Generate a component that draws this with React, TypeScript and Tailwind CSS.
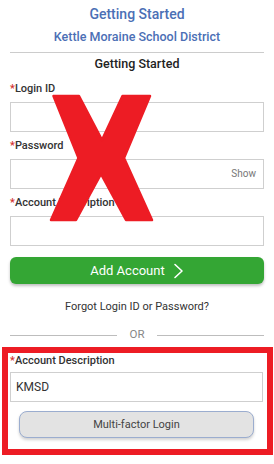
import React from "react";

function Label({ text }: { text: string }) {
  return (
    <div className="h-[16px] leading-[16px] text-[11px] font-medium text-[#333333]">
      <span className="text-[#d32f2f]">*</span>
      {text}
    </div>
  );
}

export default function App() {
  return (
    <div
      className="relative w-[274px] h-[464px] bg-white overflow-hidden"
      style={{ fontFamily: "Roboto, 'Liberation Sans', sans-serif" }}
    >
      <div className="flex flex-col px-[10px]">
        <div className="mt-[4px] h-[20px] leading-[20px] text-center text-[14px] font-medium text-[#4b6fb5]">
          Getting Started
        </div>
        <div className="mt-[4px] h-[18px] leading-[18px] text-center text-[12.5px] font-medium text-[#4b6fb5]">
          Kettle Moraine School District
        </div>
        <div className="mt-[6px] h-px bg-[#cccccc]" />
        <div className="mt-[2px] h-[18px] leading-[18px] text-center text-[12.5px] font-medium text-[#222222]">
          Getting Started
        </div>

        <div className="mt-[8px]">
          <Label text="Login ID" />
        </div>
        <div className="mt-[5px] h-[30px] border border-[#cfcfcf] bg-white" />

        <div className="mt-[6px]">
          <Label text="Password" />
        </div>
        <div className="mt-[5px] h-[30px] border border-[#cfcfcf] bg-white flex items-center justify-end pr-[7px]">
          <span className="text-[10px] text-[#777777] leading-none">Show</span>
        </div>

        <div className="mt-[6px]">
          <Label text="Account Description" />
        </div>
        <div className="mt-[5px] h-[30px] border border-[#cfcfcf] bg-white" />

        <div className="mt-[11px] h-[27px] rounded-[6px] bg-[#34a634] shadow-[0_2px_3px_rgba(0,0,0,0.25)] flex items-center justify-center gap-[8px]">
          <span className="text-[13px] text-white leading-none">Add Account</span>
          <svg width="11" height="16" viewBox="0 0 11 16" fill="none">
            <path d="M2 1.5 L9 8 L2 14.5" stroke="white" strokeWidth="1.6" strokeLinecap="round" strokeLinejoin="round" />
          </svg>
        </div>

        <div className="mt-[15px] h-[16px] leading-[16px] text-center text-[11px] text-[#333333]">
          Forgot Login ID or Password?
        </div>

        <div className="mt-[12px] h-[16px] flex items-center">
          <div className="flex-1 h-px bg-[#bdbdbd]" />
          <span className="w-[40px] text-center text-[11.5px] text-[#888888] leading-none">OR</span>
          <div className="flex-1 h-px bg-[#bdbdbd]" />
        </div>

        <div className="-ml-[8px] mt-[4px] w-[271px] h-[108px] border-[6px] border-[#ed1c24] pl-[2px] flex flex-col">
          <div className="w-[253px]">
            <Label text="Account Description" />
          </div>
          <div className="mt-[3px] w-[253px] h-[30px] border border-[#cfcfcf] bg-white flex items-center pl-[5px]">
            <span className="text-[12px] text-[#333333] leading-none">KMSD</span>
          </div>
          <div className="w-[253px] flex justify-center">
            <div className="mt-[9px] w-[235px] h-[27px] rounded-[8px] bg-[#e3e3e3] border border-[#9badcf] shadow-[0_2px_3px_rgba(0,0,0,0.18)] flex items-center justify-center">
              <span className="text-[11px] text-[#444444] leading-none">Multi-factor Login</span>
            </div>
          </div>
        </div>
      </div>

      <svg
        className="absolute left-0 top-0 pointer-events-none"
        width="274"
        height="464"
        viewBox="0 0 274 464"
      >
        <polygon
          points="53.5,96 79,96 102,140 122.5,96 150,96 124,158 152,220 126,220 101,174 76,220 51,220 78.5,158"
          fill="#ed1c24"
          stroke="#ed1c24"
          strokeWidth="2.5"
          strokeLinejoin="round"
        />
      </svg>
    </div>
  );
}
